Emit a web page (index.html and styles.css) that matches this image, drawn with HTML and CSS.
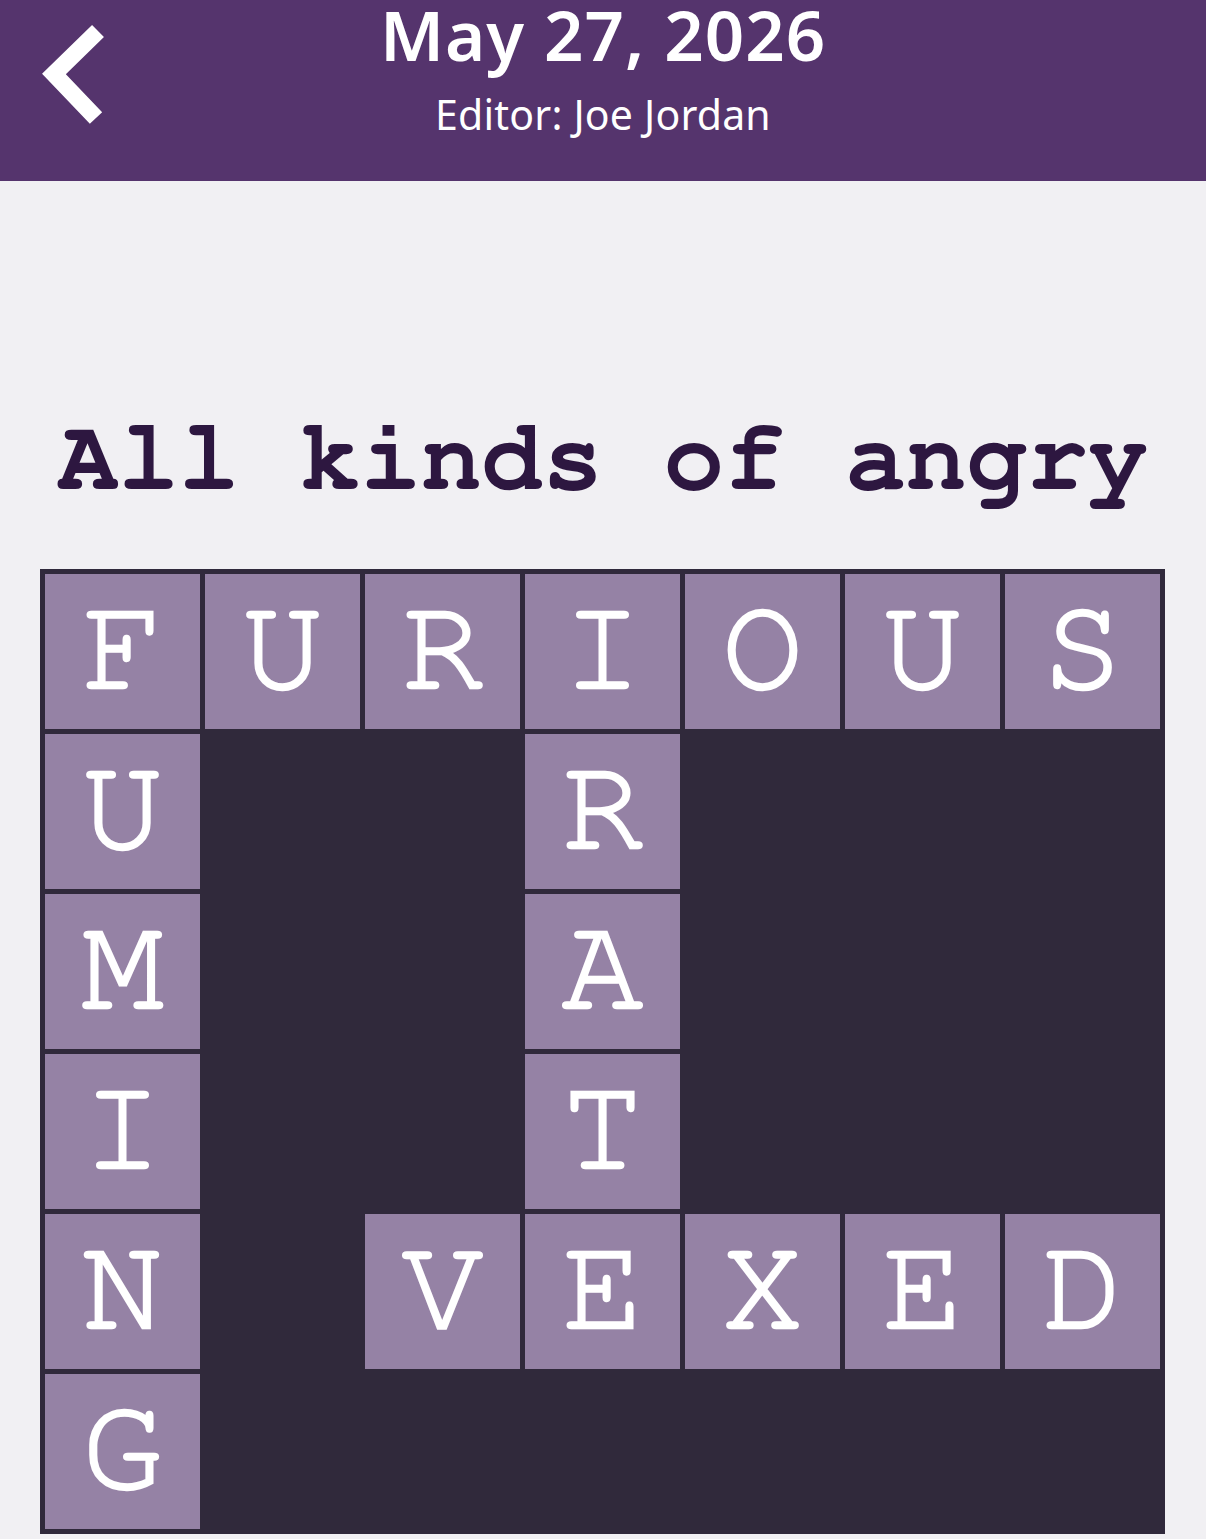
FILE: index.html
```html
<!DOCTYPE html>
<html lang="en">
<head>
<meta charset="utf-8">
<title>May 27, 2026</title>
<link rel="stylesheet" href="styles.css">
</head>
<body>
<header class="topbar">
  <div class="back">
    <svg class="back-icon" viewBox="0 0 140 181" width="140" height="181" aria-hidden="true">
      <polyline points="98,31 54,74 96,118" fill="none" stroke="#ffffff" stroke-width="17" stroke-linejoin="miter" stroke-linecap="butt"/>
    </svg>
  </div>
  <div class="heading">
    <div class="date">May 27, 2026</div>
    <div class="editor">Editor: Joe Jordan</div>
  </div>
  <div class="spacer"></div>
</header>
<main class="content">
  <h1 class="title">All kinds of angry</h1>
  <div class="board">
    <div class="cell">F</div><div class="cell">U</div><div class="cell">R</div><div class="cell">I</div><div class="cell">O</div><div class="cell">U</div><div class="cell">S</div>
    <div class="cell">U</div><div class="empty"></div><div class="empty"></div><div class="cell">R</div><div class="empty"></div><div class="empty"></div><div class="empty"></div>
    <div class="cell">M</div><div class="empty"></div><div class="empty"></div><div class="cell">A</div><div class="empty"></div><div class="empty"></div><div class="empty"></div>
    <div class="cell">I</div><div class="empty"></div><div class="empty"></div><div class="cell">T</div><div class="empty"></div><div class="empty"></div><div class="empty"></div>
    <div class="cell">N</div><div class="empty"></div><div class="cell">V</div><div class="cell">E</div><div class="cell">X</div><div class="cell">E</div><div class="cell">D</div>
    <div class="cell">G</div><div class="empty"></div><div class="empty"></div><div class="empty"></div><div class="empty"></div><div class="empty"></div><div class="empty"></div>
  </div>
</main>
</body>
</html>
```
FILE: styles.css
```css
html, body {
  margin: 0;
  padding: 0;
}
body {
  background: #f1f0f3;
  width: 1206px;
  height: 1539px;
  overflow: hidden;
  font-family: "Noto Sans", "DejaVu Sans", sans-serif;
}
.topbar {
  height: 181px;
  background: #55346d;
  display: grid;
  grid-template-columns: 140px 1fr 140px;
  color: #ffffff;
}
.back {
  height: 181px;
}
.back-icon {
  display: block;
}
.heading {
  display: flex;
  flex-direction: column;
  align-items: center;
}
.date {
  font-size: 69px;
  font-weight: 600;
  line-height: 66px;
  margin-top: 1px;
  letter-spacing: 1px;
}
.editor {
  font-size: 41px;
  font-weight: 400;
  line-height: 41px;
  margin-top: 27px;
  letter-spacing: 0.2px;
}
.content {
  padding-top: 227px;
}
.title {
  margin: 0 0 60px 0;
  height: 101px;
  font-family: "Nimbus Mono PS", "Nimbus Mono L", "FreeMono", "Courier", "Liberation Mono", monospace;
  font-weight: 700;
  font-size: 101px;
  line-height: 101px;
  color: #2d1740;
  text-align: center;
  white-space: nowrap;
}
.board {
  margin-left: 40px;
  width: 1115px;
  padding: 5px;
  background: #30293b;
  display: grid;
  grid-template-columns: repeat(7, 155px);
  grid-auto-rows: 155px;
  gap: 5px;
}
.cell {
  background: #9582a5;
  color: #ffffff;
  font-family: "Nimbus Mono PS", "Nimbus Mono L", "FreeMono", "Courier", "Liberation Mono", monospace;
  font-size: 135px;
  -webkit-text-stroke: 2.5px #ffffff;
  display: flex;
  align-items: center;
  justify-content: center;
  line-height: 1;
  padding-bottom: 8px;
  box-sizing: border-box;
}
.empty {
  background: #30293b;
}
```
